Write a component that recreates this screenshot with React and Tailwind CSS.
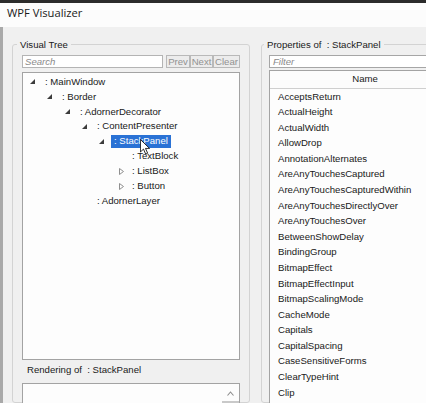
import React from "react";

const tree = [
  { pl: "pl-[3px]", exp: "filled", text: ": MainWindow" },
  { pl: "pl-[20px]", exp: "filled", text: ": Border" },
  { pl: "pl-[38px]", exp: "filled", text: ": AdornerDecorator" },
  { pl: "pl-[55px]", exp: "filled", text: ": ContentPresenter" },
  { pl: "pl-[72px]", exp: "filled", text: ": StackPanel", sel: true },
  { pl: "pl-[90px]", exp: null, text: ": TextBlock" },
  { pl: "pl-[90px]", exp: "hollow", text: ": ListBox" },
  { pl: "pl-[90px]", exp: "hollow", text: ": Button" },
  { pl: "pl-[55px]", exp: null, text: ": AdornerLayer" },
];

const props = [
  "AcceptsReturn",
  "ActualHeight",
  "ActualWidth",
  "AllowDrop",
  "AnnotationAlternates",
  "AreAnyTouchesCaptured",
  "AreAnyTouchesCapturedWithin",
  "AreAnyTouchesDirectlyOver",
  "AreAnyTouchesOver",
  "BetweenShowDelay",
  "BindingGroup",
  "BitmapEffect",
  "BitmapEffectInput",
  "BitmapScalingMode",
  "CacheMode",
  "Capitals",
  "CapitalSpacing",
  "CaseSensitiveForms",
  "ClearTypeHint",
  "Clip",
];

function Expander({ kind }) {
  return (
    <span className="w-[16px] h-full flex items-center shrink-0">
      {kind === "filled" && (
        <svg width="5" height="5" viewBox="0 0 5 5" className="ml-[4px] mb-[1px]">
          <polygon points="5,0 5,5 0,5" fill="#3c3c3c" />
        </svg>
      )}
      {kind === "hollow" && (
        <svg width="5" height="7" viewBox="0 0 5 7" className="ml-[6px]">
          <polygon points="0.5,0.5 4.5,3.5 0.5,6.5" fill="none" stroke="#8f8f8f" strokeWidth="1" />
        </svg>
      )}
    </span>
  );
}

export default function App() {
  return (
    <div className="relative w-[426px] h-[403px] overflow-hidden flex flex-col bg-[#f0f0f0] font-['Liberation_Sans',Arial,sans-serif] text-[9.6px] text-[#202020]">
      <div className="h-[3px] shrink-0 bg-[#2b2b2b]" />
      <div className="h-[24px] shrink-0 bg-[#fcfcfc] flex items-center pl-[7px] pb-[4px] font-['Open_Sans',sans-serif] text-[11.2px] text-[#1a1a1a]">
        WPF Visualizer
      </div>
      <div className="flex-1 flex border-l-[3px] border-[#a9a9a9] pl-[9px] pt-[11px] min-h-0">
        {/* Left group box */}
        <fieldset className="w-[238px] shrink-0 border border-[#d3d3d3] rounded-[3px] p-0 m-0 min-w-0">
          <legend className="ml-[4px] px-[3px] leading-[13px]">Visual Tree</legend>
          <div className="pl-[9px] pt-[4px] flex flex-col">
            <div className="flex h-[13px]">
              <div className="w-[141px] h-full border border-[#b4b4b4] bg-white flex items-center pl-[2px] italic text-[#8a8a8a] leading-none">
                Search
              </div>
              <div className="ml-[3px] w-[24px] h-full border border-[#b9b9b9] bg-[#ececec] flex items-center justify-center text-[#929292] leading-none">
                Prev
              </div>
              <div className="w-[23px] h-full border border-[#b9b9b9] bg-[#ececec] flex items-center justify-center text-[#929292] leading-none">
                Next
              </div>
              <div className="w-[27px] h-full border border-[#b9b9b9] bg-[#ececec] flex items-center justify-center text-[#929292] leading-none">
                Clear
              </div>
            </div>
            <div className="mt-[4px] w-[218px] h-[288px] border border-[#a3a3a3] bg-[#fdfdfd] pt-[2px]">
              {tree.map((r, i) => (
                <div key={i} className={`h-[14.85px] flex items-center ${r.pl}`}>
                  <Expander kind={r.exp} />
                  <span
                    className={
                      r.sel
                        ? "h-[13px] px-[3px] leading-[11px] pb-[2px] bg-[#2a72d5] text-white whitespace-pre"
                        : "h-[13px] px-[3px] leading-[11px] pb-[2px] whitespace-pre"
                    }
                  >
                    {r.text}
                  </span>
                </div>
              ))}
            </div>
            <div className="h-[23px] flex items-center pl-[5px] pb-[3px] whitespace-pre">
              {"Rendering of  : StackPanel"}
            </div>
            <div className="w-[218px] h-[60px] border border-[#a3a3a3] bg-[#fdfdfd] flex justify-end">
              <div className="w-[17px] flex flex-col items-center">
                <svg width="7" height="5" viewBox="0 0 7 5" className="mt-[7px]">
                  <polyline points="0.5,4.5 3.5,1 6.5,4.5" fill="none" stroke="#8c8c8c" strokeWidth="1.1" />
                </svg>
                <div className="mt-[5px] w-full h-[30px] bg-[#c9c9c9]" />
              </div>
            </div>
          </div>
        </fieldset>

        {/* Right group box */}
        <fieldset className="ml-[11px] w-[240px] shrink-0 border border-[#d3d3d3] rounded-[3px] p-0 m-0 min-w-0">
          <legend className="ml-[2px] px-[3px] leading-[13px] whitespace-pre">{"Properties of  : StackPanel"}</legend>
          <div className="pl-[7px] pt-[4px] flex flex-col">
            <div className="w-[230px] h-[13px] border border-[#a6a6a6] bg-white flex items-center pl-[3px] italic text-[#8a8a8a] leading-none">
              Filter
            </div>
            <div className="mt-[2px] w-[192px] h-[400px] border border-[#a3a3a3] bg-[#fdfdfd]">
              <div className="h-[18px] border-b border-[#cfcfcf] bg-[#fcfcfc] flex items-center justify-center pb-[1px]">
                Name
              </div>
              {props.map((p) => (
                <div key={p} className="h-[15.58px] flex items-center pl-[8px] whitespace-nowrap">
                  {p}
                </div>
              ))}
            </div>
          </div>
        </fieldset>
      </div>

      {/* mouse cursor */}
      <svg
        width="10"
        height="16"
        viewBox="0 0 12 19"
        className="absolute left-[140px] top-[139px]"
      >
        <path d="M0.5,0.5 L0.5,15.5 L4.2,12 L6.8,18 L9.2,17 L6.6,11.2 L11.5,11.2 Z" fill="#ffffff" stroke="#000000" strokeWidth="1" strokeLinejoin="round" />
      </svg>
    </div>
  );
}
